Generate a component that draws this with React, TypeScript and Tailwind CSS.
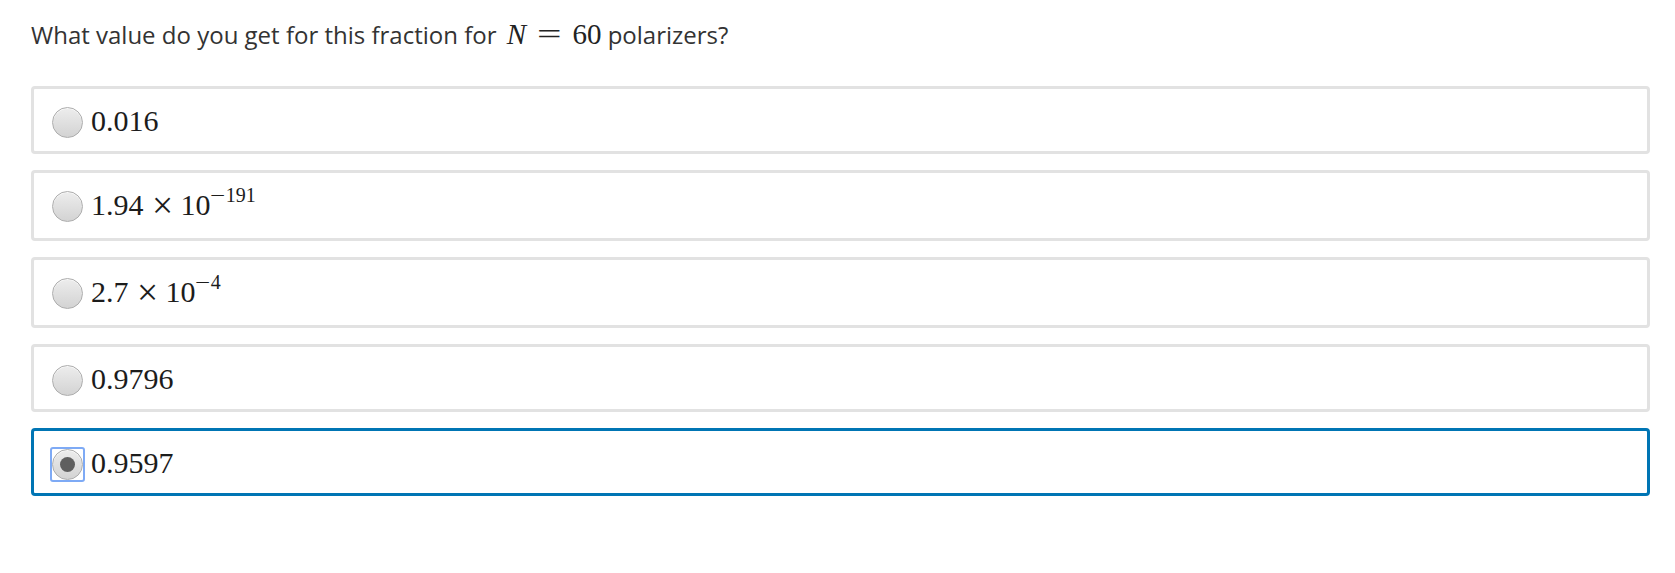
import React, { useState } from 'react';

type Choice = {
  id: string;
  label: React.ReactNode;
  tall?: boolean;
};

const serif = { fontFamily: '"Liberation Serif", "Times New Roman", serif' };

// a × 10^b, laid out like MathJax output
function Sci({ base, exp }: { base: string; exp: string }) {
  return (
    <span className="inline-flex items-baseline">
      <span>{base}</span>
      <span className="mx-[10px] inline-block scale-125">×</span>
      <span>10</span>
      <span className="relative -top-[13px] text-[20px] leading-none">
        <span className="inline-block scale-x-[1.35] origin-left mr-[4px]">−</span>
        {exp}
      </span>
    </span>
  );
}

const choices: Choice[] = [
  { id: 'a', label: '0.016' },
  { id: 'b', label: <Sci base="1.94" exp="191" />, tall: true },
  { id: 'c', label: <Sci base="2.7" exp="4" />, tall: true },
  { id: 'd', label: '0.9796' },
  { id: 'e', label: '0.9597' },
];

function Radio({ checked }: { checked: boolean }) {
  return (
    <span className="relative flex shrink-0 mt-[3px]">
      <span className="flex w-[31px] h-[31px] items-center justify-center rounded-full border border-[#adadad] bg-gradient-to-b from-[#ededed] to-[#d3d3d3] shadow-[inset_0_1px_0_#f8f8f8]">
        {checked && <span className="block w-[15px] h-[15px] rounded-full bg-[#5f5f5f]" />}
      </span>
      {/* focus ring */}
      {checked && (
        <span className="absolute -inset-[2px] rounded-[3px] border-2 border-[#7eaaf5]" />
      )}
    </span>
  );
}

export default function App() {
  const [selected, setSelected] = useState('e');

  return (
    <div
      className="w-[1675px] h-[573px] bg-white pl-[31px] pr-[25px] text-[#333333]"
      style={{ fontFamily: '"Open Sans", "Noto Sans", sans-serif' }}
    >
      <div className="pt-[17px]">
        <p className="h-[34px] flex items-baseline whitespace-pre text-[24px] leading-[34px]">
          <span>What value do you get for this fraction for </span>
          <span className="flex items-baseline text-[29px] text-[#222]" style={serif}>
            <i className="ml-[4px]">N</i>
            <span className="mx-[15px] inline-block scale-x-150">=</span>
            <span>60</span>
          </span>
          <span> polarizers?</span>
        </p>
      </div>

      <div className="mt-[35px] flex flex-col gap-[16px]">
        {choices.map(choice => {
          const isOn = selected === choice.id;
          return (
            <label
              key={choice.id}
              onClick={() => setSelected(choice.id)}
              className={`flex items-center gap-[8px] rounded-[4px] border-[3px] pl-[18px] pt-[14px] cursor-pointer ${
                choice.tall ? 'pb-[15px]' : 'pb-[12px]'
              } ${isOn ? 'border-[#0075b4]' : 'border-[#e2e2e2]'}`}
            >
              <Radio checked={isOn} />
              <span className="text-[30px] leading-[36px] text-[#1c1c1c]" style={serif}>
                {choice.label}
              </span>
            </label>
          );
        })}
      </div>
    </div>
  );
}
